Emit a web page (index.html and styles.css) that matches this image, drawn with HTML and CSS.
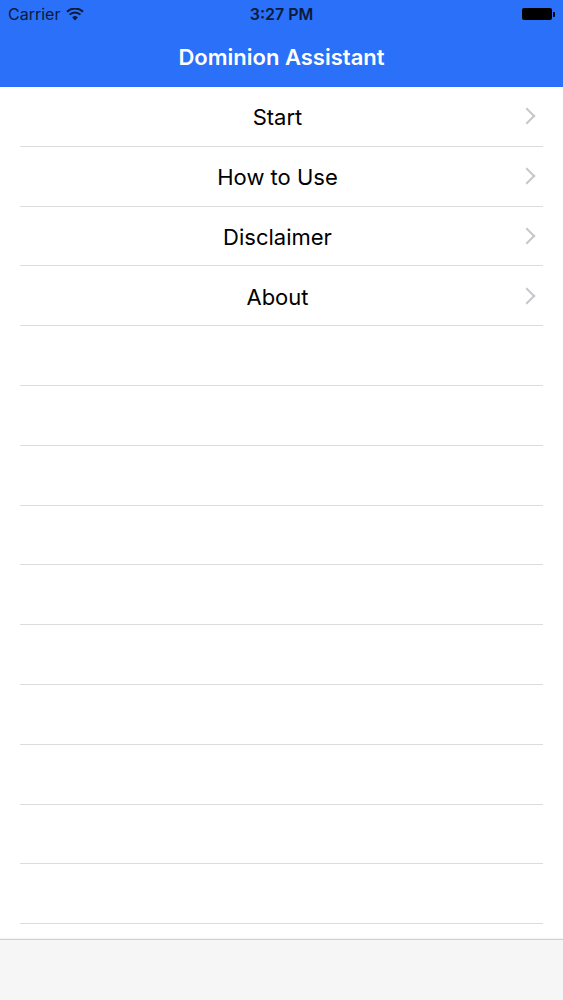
FILE: index.html
```html
<!DOCTYPE html>
<html>
<head>
    <title>Dominion Assistant</title>
    <link rel="stylesheet" href="styles.css">
</head>
<body>
    <div class="screen">
        <div class="topbar">
            <div class="status">
                <div class="status-left">
                    <span>Carrier</span>
                    <svg class="wifi" width="18" height="13" viewBox="0 0 18 13">
                        <path d="M9 12.5 L6.2 9.4 A4 4 0 0 1 11.8 9.4 Z" fill="#0a1a3a"/>
                        <path d="M3.6 6.6 A7.7 7.7 0 0 1 14.4 6.6" stroke="#0a1a3a" stroke-width="2" fill="none"/>
                        <path d="M1 3.7 A11.5 11.5 0 0 1 17 3.7" stroke="#0a1a3a" stroke-width="2" fill="none"/>
                    </svg>
                </div>
                <div class="status-time">3:27 PM</div>
                <div class="status-right">
                    <div class="battery"></div>
                    <div class="battery-nub"></div>
                </div>
            </div>
            <div class="navbar">Dominion Assistant</div>
        </div>

        <div class="list">
            <div class="row"><span class="label">Start</span><span class="chevron"></span></div>
            <div class="row"><span class="label">How to Use</span><span class="chevron"></span></div>
            <div class="row"><span class="label">Disclaimer</span><span class="chevron"></span></div>
            <div class="row"><span class="label">About</span><span class="chevron"></span></div>
            <div class="row"></div>
            <div class="row"></div>
            <div class="row"></div>
            <div class="row"></div>
            <div class="row"></div>
            <div class="row"></div>
            <div class="row"></div>
            <div class="row"></div>
            <div class="row"></div>
            <div class="row"></div>
        </div>

        <div class="toolbar"></div>
    </div>
</body>
</html>
```

FILE: styles.css
```css
body {
    margin: 0;
    font-family: Inter, "Liberation Sans", Arial, sans-serif;
    background-color: #fff;
}

.screen {
    width: 563px;
    height: 1000px;
    display: flex;
    flex-direction: column;
    overflow: hidden;
}

.topbar {
    background-color: #2a70f8;
    height: 87px;
    flex-shrink: 0;
}

.status {
    height: 28px;
    display: flex;
    align-items: center;
    justify-content: space-between;
    padding: 0 8px;
    font-size: 16px;
    color: #0a1a3a;
    position: relative;
}

.status-left {
    display: flex;
    align-items: center;
    gap: 6px;
    width: 120px;
}

.status-time {
    position: absolute;
    left: 0;
    right: 0;
    text-align: center;
    font-weight: 600;
    pointer-events: none;
}

.status-right {
    display: flex;
    align-items: center;
    justify-content: flex-end;
    width: 120px;
}

.battery {
    width: 30px;
    height: 12px;
    background-color: #000;
    border-radius: 2px;
}

.battery-nub {
    width: 2px;
    height: 5px;
    background-color: #000;
    margin-left: 1px;
    border-radius: 0 1px 1px 0;
}

.navbar {
    height: 59px;
    display: flex;
    align-items: center;
    justify-content: center;
    color: #fff;
    font-size: 22px;
    font-weight: 600;
    padding-bottom: 2px;
    box-sizing: border-box;
}

.list {
    flex: 1;
    overflow: hidden;
    background-color: #fff;
}

.row {
    height: 59.8px;
    margin: 0 20px;
    padding-top: 2px;
    border-bottom: 1px solid #dcdcdf;
    box-sizing: border-box;
    display: flex;
    align-items: center;
    justify-content: center;
    position: relative;
}

.label {
    font-size: 22px;
    color: #000;
    margin-right: 8px;
}

.chevron {
    position: absolute;
    right: 10px;
    top: 50%;
    width: 10px;
    height: 10px;
    margin-top: -6px;
    border-top: 2px solid #c7c7cc;
    border-right: 2px solid #c7c7cc;
    transform: rotate(45deg);
}

.toolbar {
    height: 60px;
    flex-shrink: 0;
    background-color: #f7f6f7;
    border-top: 1px solid #cfcfcf;
    box-shadow: 0 -1px 2px rgba(0, 0, 0, 0.05);
}
```
